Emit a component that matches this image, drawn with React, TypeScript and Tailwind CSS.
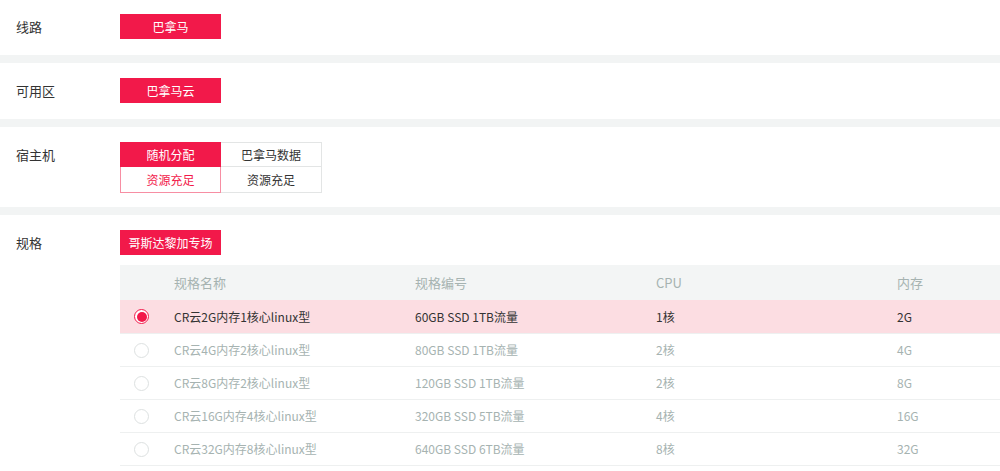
import React, { useState } from "react";

const font = { fontFamily: '"Noto Sans CJK SC", "Noto Sans", sans-serif' };

type Spec = { name: string; disk: string; cpu: string; mem: string };

const specs: Spec[] = [
  { name: "CR云2G内存1核心linux型", disk: "60GB SSD 1TB流量", cpu: "1核", mem: "2G" },
  { name: "CR云4G内存2核心linux型", disk: "80GB SSD 1TB流量", cpu: "2核", mem: "4G" },
  { name: "CR云8G内存2核心linux型", disk: "120GB SSD 1TB流量", cpu: "2核", mem: "8G" },
  { name: "CR云16G内存4核心linux型", disk: "320GB SSD 5TB流量", cpu: "4核", mem: "16G" },
  { name: "CR云32G内存8核心linux型", disk: "640GB SSD 6TB流量", cpu: "8核", mem: "32G" },
];

function Section({
  label,
  className,
  children,
}: {
  label: string;
  className: string;
  children: React.ReactNode;
}) {
  return (
    <div className={`flex bg-white ${className}`}>
      <div className="w-[120px] shrink-0 pl-4 text-[13px] leading-[25px] text-[#333]">
        {label}
      </div>
      <div className="flex-1 min-w-0">{children}</div>
    </div>
  );
}

function RedButton({ children }: { children: React.ReactNode }) {
  return (
    <div className="flex h-[25px] w-[101px] items-center justify-center bg-[#f2194a] text-[12px] text-white">
      {children}
    </div>
  );
}

function Gap() {
  return <div className="h-2 bg-[#f2f4f4]" />;
}

export default function App() {
  const [selected, setSelected] = useState(0);

  return (
    <div className="min-h-screen w-[1000px] overflow-hidden bg-white" style={font}>
      <Section label="线路" className="h-[55px] pt-[14px]">
        <RedButton>巴拿马</RedButton>
      </Section>
      <Gap />
      <Section label="可用区" className="h-[56px] pt-[15px]">
        <RedButton>巴拿马云</RedButton>
      </Section>
      <Gap />
      <Section label="宿主机" className="h-[80px] pt-[15px]">
        <div className="flex text-[12px]">
          <div className="w-[101px]">
            <div className="flex h-[25px] items-center justify-center bg-[#f2194a] text-white">
              随机分配
            </div>
            <div className="flex h-[26px] items-center justify-center border border-t-0 border-[#f78ea3] text-[#f2194a]">
              资源充足
            </div>
          </div>
          <div className="w-[101px] border border-l-0 border-[#e3e5e5] text-[#333]">
            <div className="flex h-[24px] items-center justify-center border-b border-[#e3e5e5]">
              巴拿马数据
            </div>
            <div className="flex h-[25px] items-center justify-center">资源充足</div>
          </div>
        </div>
      </Section>
      <Gap />
      <Section label="规格" className="pt-[15px]">
        <RedButton>哥斯达黎加专场</RedButton>
        <div className="mt-[10px]">
          <div className="grid h-[35px] grid-cols-[54px_241px_241px_241px_1fr] items-center bg-[#f3f5f5] text-[13px] text-[#a6b3b1]">
            <div />
            <div>规格名称</div>
            <div>规格编号</div>
            <div>CPU</div>
            <div>内存</div>
          </div>
          {specs.map((s, i) => {
            const on = i === selected;
            return (
              <div
                key={s.name}
                onClick={() => setSelected(i)}
                className={`grid h-[33px] cursor-pointer grid-cols-[54px_241px_241px_241px_1fr] items-center text-[12px] ${
                  on ? "bg-[#fcdde2] text-[#333]" : "border-t border-[#eef0f0] bg-white text-[#a6b3b1]"
                }`}
              >
                <div className="pl-[14px]">
                  {on ? (
                    <div className="flex h-[15px] w-[15px] items-center justify-center rounded-full border border-[#f2194a] bg-white">
                      <div className="h-[10px] w-[10px] rounded-full bg-[#f2194a]" />
                    </div>
                  ) : (
                    <div className="h-[15px] w-[15px] rounded-full border border-[#dde1e1] bg-white" />
                  )}
                </div>
                <div>{s.name}</div>
                <div>{s.disk}</div>
                <div>{s.cpu}</div>
                <div>{s.mem}</div>
              </div>
            );
          })}
          <div className="border-t border-[#eef0f0]" />
        </div>
      </Section>
    </div>
  );
}
